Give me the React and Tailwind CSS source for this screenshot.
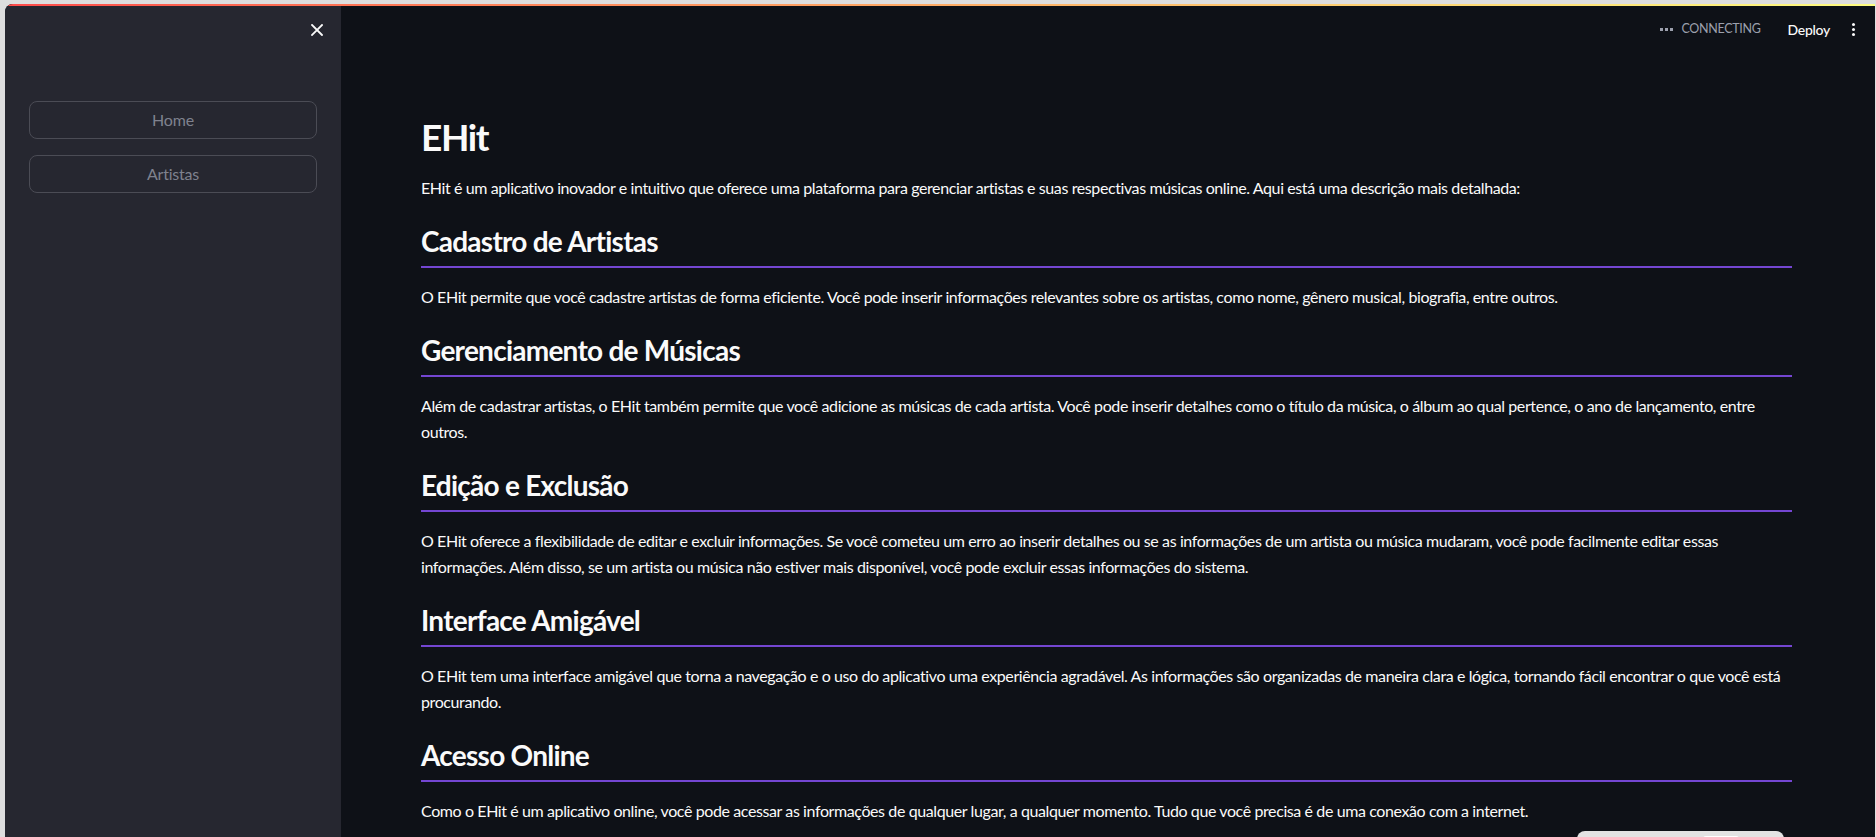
const sections = [
    {
        title: 'Cadastro de Artistas',
        text: 'O EHit permite que você cadastre artistas de forma eficiente. Você pode inserir informações relevantes sobre os artistas, como nome, gênero musical, biografia, entre outros.',
    },
    {
        title: 'Gerenciamento de Músicas',
        text: 'Além de cadastrar artistas, o EHit também permite que você adicione as músicas de cada artista. Você pode inserir detalhes como o título da música, o álbum ao qual pertence, o ano de lançamento, entre outros.',
    },
    {
        title: 'Edição e Exclusão',
        text: 'O EHit oferece a flexibilidade de editar e excluir informações. Se você cometeu um erro ao inserir detalhes ou se as informações de um artista ou música mudaram, você pode facilmente editar essas informações. Além disso, se um artista ou música não estiver mais disponível, você pode excluir essas informações do sistema.',
    },
    {
        title: 'Interface Amigável',
        text: 'O EHit tem uma interface amigável que torna a navegação e o uso do aplicativo uma experiência agradável. As informações são organizadas de maneira clara e lógica, tornando fácil encontrar o que você está procurando.',
    },
    {
        title: 'Acesso Online',
        text: 'Como o EHit é um aplicativo online, você pode acessar as informações de qualquer lugar, a qualquer momento. Tudo que você precisa é de uma conexão com a internet.',
    },
];

const font = { fontFamily: 'Lato, "Noto Sans", sans-serif' };

function SidebarButton({ label }) {
    return (
        <button className="h-[38px] w-full rounded-[8px] border border-[#4b4c55] text-[16px] tracking-[-0.2px] text-[#7f828e] bg-transparent">
            {label}
        </button>
    );
}

export default function App() {
    return (
        <div className="h-[837px] w-full overflow-hidden bg-[#dedede] pt-[4px] pl-[5px] pr-[1px]" style={font}>
            <div className="relative flex h-full overflow-hidden rounded-tl-[8px] bg-[#0e1117] text-[#fafafa]">
                {/* top decoration */}
                <div className="absolute top-0 left-0 right-0 z-10 h-[2px] bg-gradient-to-r from-[#ff4b4b] to-[#fffd80]" />

                {/* Sidebar */}
                <aside className="flex w-[336px] shrink-0 flex-col bg-[#262730]">
                    <div className="flex h-[52px] items-center justify-end pr-[18px]">
                        <svg width="12" height="12" viewBox="0 0 12 12" className="text-[#fafafa]">
                            <path d="M1 1L11 11M11 1L1 11" stroke="currentColor" strokeWidth="1.8" strokeLinecap="square" />
                        </svg>
                    </div>
                    <nav className="mt-[45px] flex flex-col gap-[16px] px-[24px]">
                        <SidebarButton label="Home" />
                        <SidebarButton label="Artistas" />
                    </nav>
                </aside>

                {/* Main */}
                <main className="flex min-w-0 flex-1 flex-col">
                    <header className="flex h-[50px] items-center justify-end gap-[20px] pr-[18px]">
                        <div className="mr-[7px] flex items-center gap-[8px] text-[#9ca0ad]">
                            <div className="flex gap-[2px]">
                                <span className="h-[3px] w-[3px] bg-[#9ca0ad]" />
                                <span className="h-[3px] w-[3px] bg-[#9ca0ad]" />
                                <span className="h-[3px] w-[3px] bg-[#9ca0ad]" />
                            </div>
                            <span className="text-[12.5px] tracking-[-0.3px]">CONNECTING</span>
                        </div>
                        <span className="text-[14px] font-medium tracking-[-0.3px] text-[#fafafa]">Deploy</span>
                        <div className="flex flex-col items-center gap-[2px] px-[2px]">
                            <span className="h-[3px] w-[3px] rounded-full bg-[#fafafa]" />
                            <span className="h-[3px] w-[3px] rounded-full bg-[#fafafa]" />
                            <span className="h-[3px] w-[3px] rounded-full bg-[#fafafa]" />
                        </div>
                    </header>

                    <div className="w-[1451px] pl-[80px] pt-[60px]">
                        <h1 className="text-[37px] font-bold leading-[46px] tracking-[-1.4px]">EHit</h1>
                        <p className="mt-[15px] text-[16px] leading-[26px] tracking-[-0.4px]">
                            EHit é um aplicativo inovador e intuitivo que oferece uma plataforma para gerenciar artistas e suas respectivas músicas online. Aqui está uma descrição mais detalhada:
                        </p>

                        {sections.map((s) => (
                            <section key={s.title} className="mt-[23px]">
                                <h3 className="text-[28px] font-bold leading-[34px] tracking-[-0.75px]">{s.title}</h3>
                                <div className="mt-[8px] h-[2px] w-full bg-[#7446d2]" />
                                <p className="mt-[16px] text-[16px] leading-[26px] tracking-[-0.4px]">{s.text}</p>
                            </section>
                        ))}
                    </div>
                </main>

                {/* bottom-right toast peek */}
                <div className="absolute bottom-[-20px] left-[1572px] h-[26px] w-[207px] rounded-[8px] bg-[#e3e3e3]">
                    <div className="ml-[126px] mt-[5px] h-[12px] w-[36px] rounded-[3px] bg-white" />
                </div>
            </div>
        </div>
    );
}
